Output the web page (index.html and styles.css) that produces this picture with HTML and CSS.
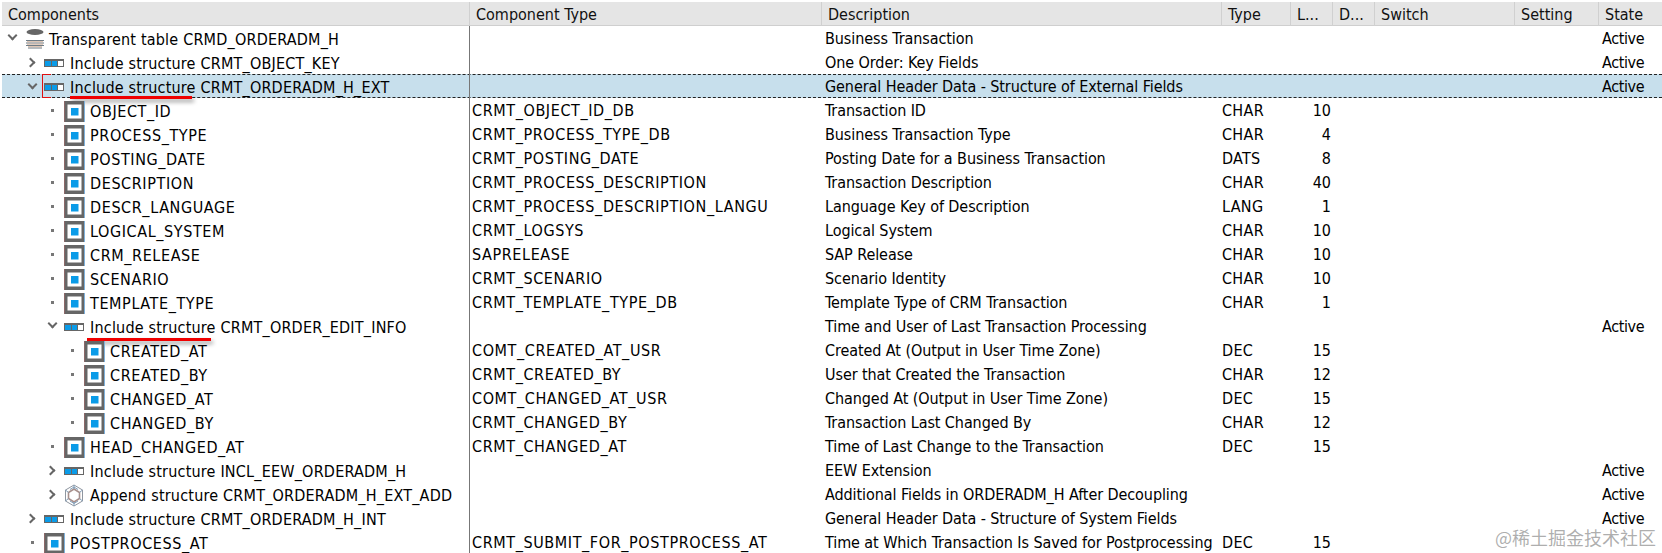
FILE: index.html
```html
<!DOCTYPE html>
<html lang="en">
<head>
<meta charset="utf-8">
<title>CRMD_ORDERADM_H</title>
<link rel="stylesheet" href="styles.css">
</head>
<body>
<svg class="defs" width="0" height="0" aria-hidden="true">
  <symbol id="field" viewBox="0 0 21 21">
    <rect x="0" y="0" width="21" height="21" fill="#666"/>
    <rect x="0" y="0" width=".6" height="21" fill="#a56a6a"/>
    <rect x="20" y="0" width="1" height="21" fill="#7fb2dc"/>
    <rect x="3.500" y="3.500" width="14" height="14" fill="#fff"/>
    <rect x="7" y="7" width="7.500" height="7.500" fill="#0a9be8"/>
  </symbol>
  <symbol id="struct" viewBox="0 0 20 8">
    <rect x="0" y="0" width="20" height="8" fill="#666"/>
    <rect x="1" y="2" width="6" height="5" fill="#0a9be8"/>
    <rect x="8" y="2" width="5" height="5" fill="#0a9be8"/>
    <rect x="14" y="2" width="5" height="5" fill="#fff"/>
  </symbol>
  <symbol id="db" viewBox="0 0 18 21">
    <ellipse cx="9" cy="3" rx="8.500" ry="3" fill="#666"/>
    <path d="M0 11.500h18M0 14h18M0 16.500h18M2 19h14" stroke="#6f7c86" stroke-width="1.200" fill="none"/>
    <path d="M1 12.700h16M1 15.200h16M2 17.700h14" stroke="#c9a48c" stroke-width=".8" fill="none"/>
  </symbol>
  <symbol id="append" viewBox="0 0 20 23">
    <path d="M10 1 18.500 6v11L10 22 1.500 17V6z" fill="none" stroke="#8f96a0" stroke-width="1"/>
    <path d="M10 5 15.500 8.500v6L10 18 4.500 14.500v-6z" fill="none" stroke="#a8908c" stroke-width="1.600"/>
    <path d="M10 1v4M18.500 6l-3 2.500M1.500 6l3 2.500M1.500 17l3-2.500M18.500 17l-3-2.500M10 22v-4M6 17l4 2.500 4-2.500M6 5.500l4-2.500 4 2.500" fill="none" stroke="#7f9db8" stroke-width="1"/>
  </symbol>
</svg>
<main class="grid">
  <div class="row head">
    <div class="hc">Components</div><div class="hc">Component Type</div><div class="hc">Description</div><div class="hc">Type</div><div class="hc">L...</div><div class="hc">D...</div><div class="hc">Switch</div><div class="hc">Setting</div><div class="hc">State</div>
  </div>

  <div class="row"><div class="tree l0"><span class="tg open"></span><svg class="ic-db"><use href="#db"/></svg><span class="lbl">Transparent table CRMD_ORDERADM_H</span></div><div class="c ct"></div><div class="c ds">Business Transaction</div><div class="c ty"></div><div class="c num"></div><div class="c"></div><div class="c"></div><div class="c"></div><div class="c st">Active</div></div>

  <div class="row"><div class="tree l1"><span class="tg closed"></span><svg class="ic-st"><use href="#struct"/></svg><span class="lbl">Include structure CRMT_OBJECT_KEY</span></div><div class="c ct"></div><div class="c ds">One Order: Key Fields</div><div class="c ty"></div><div class="c num"></div><div class="c"></div><div class="c"></div><div class="c"></div><div class="c st">Active</div></div>

  <div class="row sel"><div class="tree l1"><span class="tg open"></span><svg class="ic-st"><use href="#struct"/></svg><span class="lbl">Include structure CRMT_ORDERADM_H_EXT</span><span class="box"></span><span class="mark m1"></span></div><div class="c ct"></div><div class="c ds">General Header Data - Structure of External Fields</div><div class="c ty"></div><div class="c num"></div><div class="c"></div><div class="c"></div><div class="c"></div><div class="c st">Active</div></div>

  <div class="row"><div class="tree l2"><span class="tg dot"></span><svg class="ic-f"><use href="#field"/></svg><span class="lbl fn">OBJECT_ID</span></div><div class="c ct">CRMT_OBJECT_ID_DB</div><div class="c ds">Transaction ID</div><div class="c ty">CHAR</div><div class="c num">10</div><div class="c"></div><div class="c"></div><div class="c"></div><div class="c st"></div></div>

  <div class="row"><div class="tree l2"><span class="tg dot"></span><svg class="ic-f"><use href="#field"/></svg><span class="lbl fn">PROCESS_TYPE</span></div><div class="c ct">CRMT_PROCESS_TYPE_DB</div><div class="c ds">Business Transaction Type</div><div class="c ty">CHAR</div><div class="c num">4</div><div class="c"></div><div class="c"></div><div class="c"></div><div class="c st"></div></div>

  <div class="row"><div class="tree l2"><span class="tg dot"></span><svg class="ic-f"><use href="#field"/></svg><span class="lbl fn">POSTING_DATE</span></div><div class="c ct">CRMT_POSTING_DATE</div><div class="c ds">Posting Date for a Business Transaction</div><div class="c ty">DATS</div><div class="c num">8</div><div class="c"></div><div class="c"></div><div class="c"></div><div class="c st"></div></div>

  <div class="row"><div class="tree l2"><span class="tg dot"></span><svg class="ic-f"><use href="#field"/></svg><span class="lbl fn">DESCRIPTION</span></div><div class="c ct">CRMT_PROCESS_DESCRIPTION</div><div class="c ds">Transaction Description</div><div class="c ty">CHAR</div><div class="c num">40</div><div class="c"></div><div class="c"></div><div class="c"></div><div class="c st"></div></div>

  <div class="row"><div class="tree l2"><span class="tg dot"></span><svg class="ic-f"><use href="#field"/></svg><span class="lbl fn">DESCR_LANGUAGE</span></div><div class="c ct">CRMT_PROCESS_DESCRIPTION_LANGU</div><div class="c ds">Language Key of Description</div><div class="c ty">LANG</div><div class="c num">1</div><div class="c"></div><div class="c"></div><div class="c"></div><div class="c st"></div></div>

  <div class="row"><div class="tree l2"><span class="tg dot"></span><svg class="ic-f"><use href="#field"/></svg><span class="lbl fn">LOGICAL_SYSTEM</span></div><div class="c ct">CRMT_LOGSYS</div><div class="c ds">Logical System</div><div class="c ty">CHAR</div><div class="c num">10</div><div class="c"></div><div class="c"></div><div class="c"></div><div class="c st"></div></div>

  <div class="row"><div class="tree l2"><span class="tg dot"></span><svg class="ic-f"><use href="#field"/></svg><span class="lbl fn">CRM_RELEASE</span></div><div class="c ct">SAPRELEASE</div><div class="c ds">SAP Release</div><div class="c ty">CHAR</div><div class="c num">10</div><div class="c"></div><div class="c"></div><div class="c"></div><div class="c st"></div></div>

  <div class="row"><div class="tree l2"><span class="tg dot"></span><svg class="ic-f"><use href="#field"/></svg><span class="lbl fn">SCENARIO</span></div><div class="c ct">CRMT_SCENARIO</div><div class="c ds">Scenario Identity</div><div class="c ty">CHAR</div><div class="c num">10</div><div class="c"></div><div class="c"></div><div class="c"></div><div class="c st"></div></div>

  <div class="row"><div class="tree l2"><span class="tg dot"></span><svg class="ic-f"><use href="#field"/></svg><span class="lbl fn">TEMPLATE_TYPE</span></div><div class="c ct">CRMT_TEMPLATE_TYPE_DB</div><div class="c ds">Template Type of CRM Transaction</div><div class="c ty">CHAR</div><div class="c num">1</div><div class="c"></div><div class="c"></div><div class="c"></div><div class="c st"></div></div>

  <div class="row"><div class="tree l2"><span class="tg open"></span><svg class="ic-st"><use href="#struct"/></svg><span class="lbl">Include structure CRMT_ORDER_EDIT_INFO</span><span class="mark m2"></span></div><div class="c ct"></div><div class="c ds">Time and User of Last Transaction Processing</div><div class="c ty"></div><div class="c num"></div><div class="c"></div><div class="c"></div><div class="c"></div><div class="c st">Active</div></div>

  <div class="row"><div class="tree l3"><span class="tg dot"></span><svg class="ic-f"><use href="#field"/></svg><span class="lbl fn">CREATED_AT</span></div><div class="c ct">COMT_CREATED_AT_USR</div><div class="c ds">Created At (Output in User Time Zone)</div><div class="c ty">DEC</div><div class="c num">15</div><div class="c"></div><div class="c"></div><div class="c"></div><div class="c st"></div></div>

  <div class="row"><div class="tree l3"><span class="tg dot"></span><svg class="ic-f"><use href="#field"/></svg><span class="lbl fn">CREATED_BY</span></div><div class="c ct">CRMT_CREATED_BY</div><div class="c ds">User that Created the Transaction</div><div class="c ty">CHAR</div><div class="c num">12</div><div class="c"></div><div class="c"></div><div class="c"></div><div class="c st"></div></div>

  <div class="row"><div class="tree l3"><span class="tg dot"></span><svg class="ic-f"><use href="#field"/></svg><span class="lbl fn">CHANGED_AT</span></div><div class="c ct">COMT_CHANGED_AT_USR</div><div class="c ds">Changed At (Output in User Time Zone)</div><div class="c ty">DEC</div><div class="c num">15</div><div class="c"></div><div class="c"></div><div class="c"></div><div class="c st"></div></div>

  <div class="row"><div class="tree l3"><span class="tg dot"></span><svg class="ic-f"><use href="#field"/></svg><span class="lbl fn">CHANGED_BY</span></div><div class="c ct">CRMT_CHANGED_BY</div><div class="c ds">Transaction Last Changed By</div><div class="c ty">CHAR</div><div class="c num">12</div><div class="c"></div><div class="c"></div><div class="c"></div><div class="c st"></div></div>

  <div class="row"><div class="tree l2"><span class="tg dot"></span><svg class="ic-f"><use href="#field"/></svg><span class="lbl fn">HEAD_CHANGED_AT</span></div><div class="c ct">CRMT_CHANGED_AT</div><div class="c ds">Time of Last Change to the Transaction</div><div class="c ty">DEC</div><div class="c num">15</div><div class="c"></div><div class="c"></div><div class="c"></div><div class="c st"></div></div>

  <div class="row"><div class="tree l2"><span class="tg closed"></span><svg class="ic-st"><use href="#struct"/></svg><span class="lbl">Include structure INCL_EEW_ORDERADM_H</span></div><div class="c ct"></div><div class="c ds">EEW Extension</div><div class="c ty"></div><div class="c num"></div><div class="c"></div><div class="c"></div><div class="c"></div><div class="c st">Active</div></div>

  <div class="row"><div class="tree l2"><span class="tg closed"></span><svg class="ic-ap"><use href="#append"/></svg><span class="lbl">Append structure CRMT_ORDERADM_H_EXT_ADD</span></div><div class="c ct"></div><div class="c ds">Additional Fields in ORDERADM_H After Decoupling</div><div class="c ty"></div><div class="c num"></div><div class="c"></div><div class="c"></div><div class="c"></div><div class="c st">Active</div></div>

  <div class="row"><div class="tree l1"><span class="tg closed"></span><svg class="ic-st"><use href="#struct"/></svg><span class="lbl">Include structure CRMT_ORDERADM_H_INT</span></div><div class="c ct"></div><div class="c ds">General Header Data - Structure of System Fields</div><div class="c ty"></div><div class="c num"></div><div class="c"></div><div class="c"></div><div class="c"></div><div class="c st">Active</div></div>

  <div class="row"><div class="tree l1"><span class="tg dot"></span><svg class="ic-f"><use href="#field"/></svg><span class="lbl fn">POSTPROCESS_AT</span></div><div class="c ct">CRMT_SUBMIT_FOR_POSTPROCESS_AT</div><div class="c ds">Time at Which Transaction Is Saved for Postprocessing</div><div class="c ty">DEC</div><div class="c num">15</div><div class="c"></div><div class="c"></div><div class="c"></div><div class="c st"></div></div>

  <div class="wm">@稀土掘金技术社区</div>
</main>
</body>
</html>
```

FILE: styles.css
```css
html, body { margin: 0; padding: 0; background: #fff; }
body {
  width: 1662px;
  height: 553px;
  overflow: hidden;
  font-family: "DejaVu Sans Condensed", "DejaVu Sans", sans-serif;
  font-stretch: condensed;
  font-size: 16px;
  color: #000;
}
.defs { position: absolute; }
.grid { position: relative; padding: 2px 0 0 2px; }
.row {
  display: grid;
  grid-template-columns: 468px 352px 400px 69px 42px 42px 140px 84px 63px;
  height: 24px;
  line-height: 26px;
  white-space: nowrap;
}
.head {
  background: #e5e5e5;
  box-shadow: inset 0 -1px 0 #cfcfcf;
}
.hc {
  padding-left: 6px;
  border-right: 1px solid #d0d0d0;
  overflow: hidden;
  color: #111;
}
.hc:last-child { border-right: 0; }
.c { overflow: hidden; }
.ct { padding-left: 2px; letter-spacing: .6px; }
.ds { padding-left: 3px; letter-spacing: -.08px; }
.ty { padding-left: 0; letter-spacing: .3px; }
.num { padding-right: 2px; text-align: right; }
.st { padding-left: 3px; letter-spacing: -.4px; }
.lbl { letter-spacing: .2px; line-height: 24px; margin-top: 2px; }
.lbl.fn { letter-spacing: .6px; }
.tree {
  position: relative;
  display: flex;
  align-items: center;
  border-right: 1px solid #777;
}
.l0 { padding-left: 3px; }
.l1 { padding-left: 23px; }
.l2 { padding-left: 43px; }
.l3 { padding-left: 63px; }
.tg { flex: 0 0 19px; height: 24px; position: relative; }
.tg.open::before, .tg.closed::before {
  content: "";
  position: absolute;
  width: 5px;
  height: 5px;
  border-right: 2px solid #666;
  border-bottom: 2px solid #666;
}
.tg.open::before { left: 4px; top: 5px; transform: rotate(45deg); }
.tg.closed::before { left: 2px; top: 8px; transform: rotate(-45deg); }
.tg.dot::before {
  content: "";
  position: absolute;
  left: 6px;
  top: 10px;
  width: 3px;
  height: 3px;
  background: #777;
}
.ic-f { flex: none; width: 21px; height: 21px; margin-right: 5px; }
.ic-st { flex: none; width: 20px; height: 8px; margin-right: 6px; }
.ic-db { flex: none; width: 18px; height: 21px; margin-left: 2px; margin-right: 5px; }
.ic-ap { flex: none; width: 20px; height: 23px; margin-right: 6px; }
.sel {
  background: #c7dfec;
  border-top: 1px dashed #222;
  border-bottom: 1px dashed #222;
  height: 22px;
  line-height: 24px;
}
.sel .lbl { line-height: 22px; }
.sel .tg { height: 22px; }
.box {
  position: absolute;
  left: 40px;
  top: -1px;
  width: 8px;
  height: 22px;
  border-left: 1px solid #e01010;
  border-top: 1px solid #e01010;
  border-bottom: 1px solid #e01010;
}
.mark {
  position: absolute;
  height: 3px;
  background: #f00000;
  box-shadow: 2px 3px 4px rgba(0, 0, 0, .4);
}
.m1 { left: 68px; top: 21px; width: 122px; }
.m2 { left: 85px; top: 24px; width: 124px; }
.wm {
  position: absolute;
  right: 6px;
  bottom: 6px;
  font-family: "Noto Sans CJK SC", sans-serif;
  font-size: 18px;
  line-height: 22px;
  color: rgba(120, 120, 120, .6);
}
```
